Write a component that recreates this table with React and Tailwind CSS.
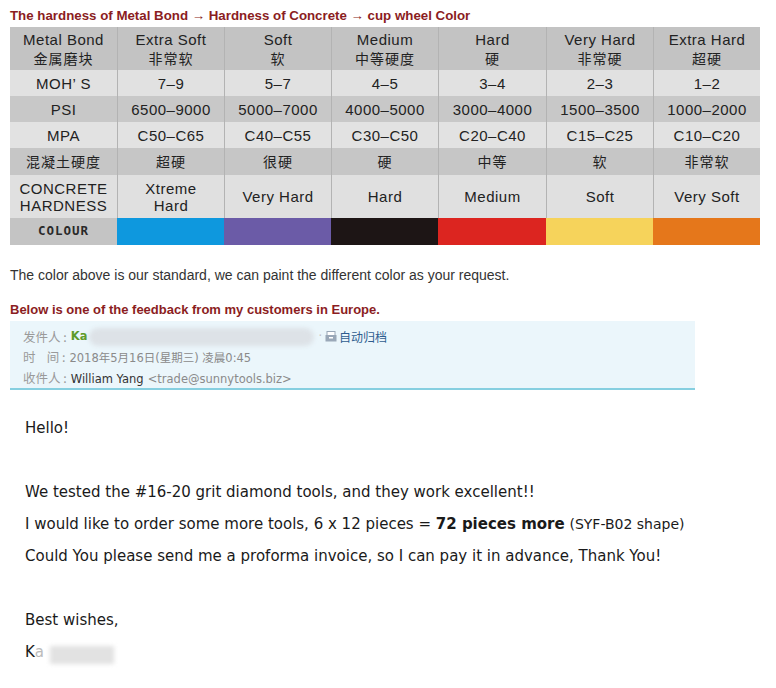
import React from "react";

const GRID = "grid grid-cols-[107px_107px_107px_107px_108px_107px_107px]";

function Cell({ first, children, className = "" }) {
  return (
    <div
      className={
        "flex flex-col items-center justify-center text-center " +
        (first ? "" : "border-l border-[#b3b3b3] ") +
        className
      }
    >
      {children}
    </div>
  );
}

const CJK = "font-['Noto_Sans_CJK_SC',sans-serif] text-[14px] tracking-[1px]";

function Row({ bg, h, cells, cjk, lead = "leading-[17px]" }) {
  return (
    <div className={GRID + " " + bg + " " + h}>
      {cells.map((c, i) => (
        <Cell key={i} first={i === 0} className={lead}>
          {Array.isArray(c) ? (
            c.map((line, j) => (
              <span key={j} className={/[\u4e00-\u9fff]/.test(line) ? CJK : ""}>
                {line}
              </span>
            ))
          ) : (
            <span className={cjk ? CJK : ""}>{c}</span>
          )}
        </Cell>
      ))}
    </div>
  );
}

function ArchiveIcon() {
  return (
    <svg width="12" height="11" viewBox="0 0 12 11" className="mr-[2px]">
      <rect x="0.5" y="4" width="11" height="6.5" fill="#9aa8b8" />
      <rect x="2" y="0.5" width="8" height="4" fill="#fff" stroke="#9aa8b8" />
      <rect x="4" y="6" width="4" height="1.5" fill="#fff" />
    </svg>
  );
}

export default function App() {
  const colours = ["bg-[#0e98de]", "bg-[#6b5ba7]", "bg-[#1d1515]", "bg-[#dc2520]", "bg-[#f6d35b]", "bg-[#e5771b]"];
  return (
    <div className="w-[776px] h-[688px] bg-white font-['Liberation_Sans',Arial,sans-serif] text-[#1f1f1f] overflow-hidden">
      <div className="pt-[7px] pl-[10px] text-[13.3px] leading-[18px] font-bold text-[#8b1d22]">
        The hardness of Metal Bond → Hardness of Concrete → cup wheel Color
      </div>

      <div className="ml-[10px] mt-[2px] w-[750px] text-[15px] tracking-[0.5px] text-[#222]">
        <Row
          bg="bg-[#c3c3c3]"
          h="h-[43px]"
          lead="leading-[19px]"
          cells={[
            ["Metal Bond", "金属磨块"],
            ["Extra Soft", "非常软"],
            ["Soft", "软"],
            ["Medium", "中等硬度"],
            ["Hard", "硬"],
            ["Very Hard", "非常硬"],
            ["Extra Hard", "超硬"],
          ]}
        />
        <Row bg="bg-[#e1e1e1]" h="h-[26px]" cells={["MOH’ S", "7–9", "5–7", "4–5", "3–4", "2–3", "1–2"]} />
        <Row
          bg="bg-[#c8c8c8]"
          h="h-[26px]"
          cells={["PSI", "6500–9000", "5000–7000", "4000–5000", "3000–4000", "1500–3500", "1000–2000"]}
        />
        <Row
          bg="bg-[#e2e2e2]"
          h="h-[26px]"
          cells={["MPA", "C50–C65", "C40–C55", "C30–C50", "C20–C40", "C15–C25", "C10–C20"]}
        />
        <Row
          bg="bg-[#c6c6c6]"
          h="h-[27px]"
          cjk
          cells={["混凝土硬度", "超硬", "很硬", "硬", "中等", "软", "非常软"]}
        />
        <Row
          bg="bg-[#e0e0e0]"
          h="h-[43px]"
          cells={[
            ["CONCRETE", "HARDNESS"],
            ["Xtreme", "Hard"],
            "Very Hard",
            "Hard",
            "Medium",
            "Soft",
            "Very Soft",
          ]}
        />
        <div className={GRID + " h-[27px]"}>
          <div className="bg-[#c4c4c4] flex items-center justify-center font-['DejaVu_Sans_Mono',monospace] font-semibold text-[12.5px] tracking-[1px] text-[#2a2a2a]">
            COLOUR
          </div>
          {colours.map((c) => (
            <div key={c} className={c} />
          ))}
        </div>
      </div>

      <div className="mt-[21px] pl-[10px] text-[14px] leading-[18px] text-[#333]">
        The color above is our standard, we can paint the different color as your request.
      </div>
      <div className="mt-[17px] pl-[10px] text-[13px] leading-[18px] font-bold text-[#8b1d22]">
        Below is one of the feedback from my customers in Europe.
      </div>

      <div className="ml-[10px] mt-[2px] w-[685px] h-[69px] bg-[#ebf6fb] border-b-2 border-[#86cfe0] pl-[13px] pt-[6px] font-['DejaVu_Sans','Noto_Sans_CJK_SC',sans-serif] text-[11.5px] leading-[19.5px] text-[#8a8a8a]">
        <div className="flex items-center">
          <span className="font-['Noto_Sans_CJK_SC',sans-serif] text-[12.5px] text-[#9a9a9a]">发件人 :</span>
          <span className="ml-[4px] font-bold text-[#5e9b2a]">Ka</span>
          <div className="ml-[2px] w-[225px] h-[18px] rounded-full bg-[#dde2e7] blur-[2px]" />
          <span className="ml-[4px] text-[#c0c0c0]">·</span>
          <span className="ml-[3px] flex items-center font-['Noto_Sans_CJK_SC',sans-serif] text-[#2f5d8f] text-[12px]">
            <ArchiveIcon />
            自动归档
          </span>
        </div>
        <div>
          <span className="font-['Noto_Sans_CJK_SC',sans-serif] text-[12.5px] text-[#9a9a9a]">时&nbsp;&nbsp;&nbsp;&nbsp;间 :</span>
          <span className="ml-[4px]">2018年5月16日(星期三) 凌晨0:45</span>
        </div>
        <div>
          <span className="font-['Noto_Sans_CJK_SC',sans-serif] text-[12.5px] text-[#9a9a9a]">收件人 :</span>
          <span className="ml-[4px] text-[#333]">William Yang</span>
          <span className="ml-[4px] text-[#8a8a8a]">&lt;trade@sunnytools.biz&gt;</span>
        </div>
      </div>

      <div className="mt-[22px] pl-[25px] font-['DejaVu_Sans',sans-serif] text-[15px] leading-[32px] text-[#1a1a1a]">
        <div>Hello!</div>
        <div className="h-[32px]" />
        <div>We tested the #16-20 grit diamond tools, and they work excellent!!</div>
        <div>
          I would like to order some more tools, 6 x 12 pieces = <span className="font-bold">72 pieces more</span>{" "}
          <span className="text-[14px]">(SYF-B02 shape)</span>
        </div>
        <div>Could You please send me a proforma invoice, so I can pay it in advance, Thank You!</div>
        <div className="h-[32px]" />
        <div>Best wishes,</div>
        <div className="flex items-center">
          <span>K</span>
          <span className="text-[#bbb]">a</span>
          <div className="ml-[6px] w-[64px] h-[18px] bg-[#e2e2e2] blur-[2px] mt-[6px]" />
        </div>
      </div>
    </div>
  );
}
